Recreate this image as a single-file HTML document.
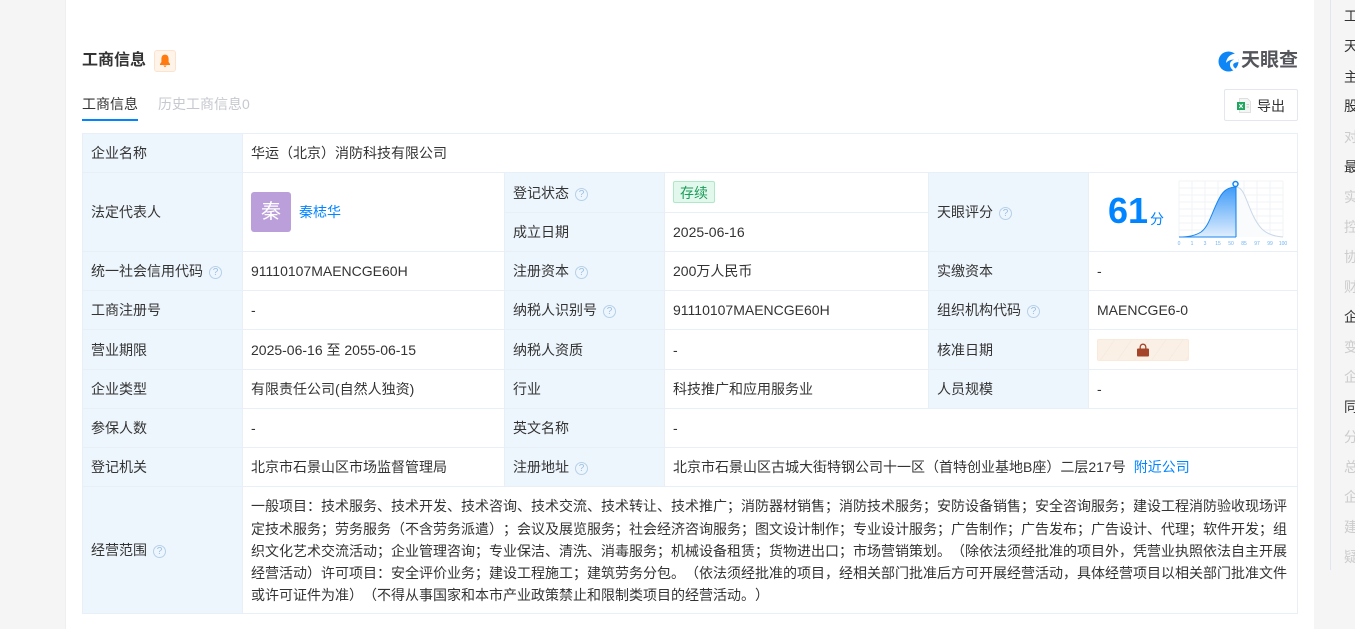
<!DOCTYPE html>
<html lang="zh"><head><meta charset="utf-8"><title>工商信息</title>
<style>
html,body{margin:0;padding:0;background:#f5f5f5}
body{width:1355px;height:629px;overflow:hidden;position:relative;font-family:"Liberation Sans","WenQuanYi Zen Hei","Noto Sans CJK SC",sans-serif;font-size:14px;color:#333;text-spacing-trim:space-all}
.a{position:absolute;white-space:nowrap}
.card{position:absolute;left:66px;top:0;width:1248px;height:629px;background:#fff}
.r{position:absolute;background:#e8eff6}
.bg{position:absolute;background:#eef6fd}
.t{position:absolute;white-space:nowrap;line-height:20px;height:20px}
.q{display:inline-block;width:11px;height:11px;border:1px solid #b6d0e9;border-radius:50%;color:#9dbfe0;font-size:10px;line-height:11px;text-align:center;margin-left:6px;vertical-align:1px;font-family:"Liberation Sans",sans-serif}
.s{position:absolute;left:1344px;font-size:14px;line-height:20px;color:#333}
.g{color:#ccc}
.l{position:absolute;left:251px;width:1036px;height:23px;line-height:23px;white-space:normal;text-align:justify;text-align-last:justify}
</style></head><body>
<div class="card"></div>
<div class="a" style="left:65px;top:0;width:1px;height:629px;background:#efefef"></div>
<div class="a" style="left:1314px;top:0;width:41px;height:629px;background:#f5f5f5"></div>
<div class="a" style="left:1330px;top:0;width:1px;height:570px;background:#dfe6ee"></div>

<div class="a" style="left:82px;top:50px;font-size:16px;line-height:22px;font-weight:700;color:#333">工商信息</div>
<div class="a" style="left:154px;top:50px;width:20px;height:20px;background:#fff4ea;border:1px solid #fde3cc;border-radius:3px"></div>
<svg class="a" style="left:159px;top:54px" width="12" height="14" viewBox="0 0 12 14"><path d="M6 .6C3.400.6 2.400 2.600 2.400 5v3L1 10v1h10v-1L9.600 8V5C9.600 2.600 8.600.6 6 .6z" fill="#ff7a0f"/><path d="M4.300 11.500h3.400L6 13.200z" fill="#ff7a0f"/></svg>

<!-- logo -->
<svg class="a" style="left:1218px;top:51px" width="21" height="21" viewBox="0 0 21 21"><circle cx="10.500" cy="10.500" r="10" fill="#0f86f5"/><path d="M18 2.500C12.500 2.800 8.500 6.500 8 12c2-2.400 5-3.600 8-3.300-3 1-4.300 3-4 5.500.3 2.400 1.800 4.300 3.800 5.300 1-.5 1.800-1.100 2.400-1.800-1.600-.6-2.900-1.900-3-3.500-.1-1.500 1-2.700 5.300-3.200-.1-3.400-.8-6-2.500-8.500z" fill="#fff"/></svg>
<div class="a" style="left:1241px;top:49px;font-size:19px;line-height:24px;font-weight:700;color:#54565c">天眼查</div>

<div class="a" style="left:82px;top:94px;font-size:14px;line-height:20px;color:#333">工商信息</div>
<div class="a" style="left:82px;top:119px;width:56px;height:2px;background:#0084ff"></div>
<div class="a" style="left:158px;top:94px;font-size:14px;line-height:20px;color:#c5c8ce">历史工商信息0</div>

<div class="a" style="left:1224px;top:89px;width:72px;height:30px;border:1px solid #e4e7ee;border-radius:2px;background:#fff"></div>
<svg class="a" style="left:1237px;top:98px" width="14" height="15" viewBox="0 0 14 15"><path d="M2.500.5h8L13.500 3.500v11h-11z" fill="#f4f5f5" stroke="#d4d6d6" stroke-width=".7"/><rect x="0" y="4" width="8" height="8" fill="#1fa65f"/><path d="M2.300 6l3.400 4M5.700 6l-3.400 4" stroke="#fff" stroke-width="1"/><path d="M9.500 6.500h2.500M9.500 9h2.500" stroke="#ccc"/></svg>
<div class="a" style="left:1257px;top:96px;font-size:14px;line-height:20px;color:#333">导出</div>

<!-- table backgrounds -->
<div class="bg" style="left:83px;top:134px;width:159px;height:479px"></div>
<div class="bg" style="left:505px;top:173px;width:159px;height:313px"></div>
<div class="bg" style="left:929px;top:173px;width:159px;height:235px"></div>

<!-- table lines -->
<div class="r" style="left:82px;top:133px;width:1216px;height:1px"></div>
<div class="r" style="left:82px;top:172px;width:1216px;height:1px"></div>
<div class="r" style="left:504px;top:212px;width:424px;height:1px"></div>
<div class="r" style="left:82px;top:251px;width:1216px;height:1px"></div>
<div class="r" style="left:82px;top:290px;width:1216px;height:1px"></div>
<div class="r" style="left:82px;top:329px;width:1216px;height:1px"></div>
<div class="r" style="left:82px;top:369px;width:1216px;height:1px"></div>
<div class="r" style="left:82px;top:408px;width:1216px;height:1px"></div>
<div class="r" style="left:82px;top:447px;width:1216px;height:1px"></div>
<div class="r" style="left:82px;top:486px;width:1216px;height:1px"></div>
<div class="r" style="left:82px;top:613px;width:1216px;height:1px"></div>
<div class="r" style="left:82px;top:133px;width:1px;height:481px"></div>
<div class="r" style="left:242px;top:133px;width:1px;height:481px"></div>
<div class="r" style="left:504px;top:172px;width:1px;height:315px"></div>
<div class="r" style="left:664px;top:172px;width:1px;height:315px"></div>
<div class="r" style="left:928px;top:172px;width:1px;height:236px"></div>
<div class="r" style="left:1088px;top:172px;width:1px;height:236px"></div>
<div class="r" style="left:1297px;top:133px;width:1px;height:481px"></div>

<!-- labels col 1 -->
<div class="t" style="left:91px;top:143px">企业名称</div>
<div class="t" style="left:91px;top:202px">法定代表人</div>
<div class="t" style="left:91px;top:261px">统一社会信用代码<span class="q">?</span></div>
<div class="t" style="left:91px;top:300px">工商注册号</div>
<div class="t" style="left:91px;top:340px">营业期限</div>
<div class="t" style="left:91px;top:379px">企业类型</div>
<div class="t" style="left:91px;top:418px">参保人数</div>
<div class="t" style="left:91px;top:457px">登记机关</div>
<div class="t" style="left:91px;top:540px">经营范围<span class="q">?</span></div>

<!-- col 2 -->
<div class="t" style="left:251px;top:143px">华运（北京）消防科技有限公司</div>
<div class="a" style="left:251px;top:192px;width:40px;height:40px;border-radius:3px;background:#bb9fdb;color:#fff;font-size:20px;line-height:40px;text-align:center">秦</div>
<div class="t" style="left:299px;top:202px;color:#0084ff">秦梽华</div>
<div class="t" style="left:251px;top:261px">91110107MAENCGE60H</div>
<div class="t" style="left:251px;top:300px">-</div>
<div class="t" style="left:251px;top:340px">2025-06-16 至 2055-06-15</div>
<div class="t" style="left:251px;top:379px">有限责任公司(自然人独资)</div>
<div class="t" style="left:251px;top:418px">-</div>
<div class="t" style="left:251px;top:457px">北京市石景山区市场监督管理局</div>

<!-- col 3 labels -->
<div class="t" style="left:513px;top:183px">登记状态<span class="q">?</span></div>
<div class="t" style="left:513px;top:222px">成立日期</div>
<div class="t" style="left:513px;top:261px">注册资本<span class="q">?</span></div>
<div class="t" style="left:513px;top:300px">纳税人识别号<span class="q">?</span></div>
<div class="t" style="left:513px;top:340px">纳税人资质</div>
<div class="t" style="left:513px;top:379px">行业</div>
<div class="t" style="left:513px;top:418px">英文名称</div>
<div class="t" style="left:513px;top:457px">注册地址<span class="q">?</span></div>

<!-- col 4 -->
<div class="a" style="left:673px;top:181px;width:40px;height:20px;background:#e3f8ec;border:1px solid #aee8c8;border-radius:2px;color:#1a9c5a;font-size:14px;line-height:22px;text-align:center">存续</div>
<div class="t" style="left:673px;top:222px">2025-06-16</div>
<div class="t" style="left:673px;top:261px">200万人民币</div>
<div class="t" style="left:673px;top:300px">91110107MAENCGE60H</div>
<div class="t" style="left:673px;top:340px">-</div>
<div class="t" style="left:673px;top:379px">科技推广和应用服务业</div>
<div class="t" style="left:673px;top:418px">-</div>
<div class="t" style="left:673px;top:457px">北京市石景山区古城大街特钢公司十一区（首特创业基地B座）二层217号<span style="color:#0084ff;margin-left:8px">附近公司</span></div>

<!-- col 5 -->
<div class="t" style="left:937px;top:202px">天眼评分<span class="q">?</span></div>
<div class="t" style="left:937px;top:261px">实缴资本</div>
<div class="t" style="left:937px;top:300px">组织机构代码<span class="q">?</span></div>
<div class="t" style="left:937px;top:340px">核准日期</div>
<div class="t" style="left:937px;top:379px">人员规模</div>

<!-- col 6 -->
<div class="a" style="left:1108px;top:188px;font-size:36px;line-height:46px;font-weight:700;color:#0084ff">61</div>
<div class="a" style="left:1150px;top:209px;font-size:14px;line-height:20px;color:#0084ff">分</div>
<svg class="a" style="left:1176px;top:178px" width="114" height="70" viewBox="0 0 114 70">
<defs><linearGradient id="f" x1="0" y1="0" x2="0" y2="1"><stop offset="0" stop-color="#3f9bf8"/><stop offset="1" stop-color="#e0eefd"/></linearGradient></defs>
<g stroke="#f1f3f6" stroke-width="1" fill="none">
<path d="M3 3h104M3 10h104M3 17h104M3 24h104M3 31h104M3 38h104M3 45h104M3 52h104"/>
<path d="M3 3v56M16 3v56M29 3v56M42 3v56M55 3v56M68 3v56M81 3v56M94 3v56M107 3v56"/>
</g>
<path d="M60 9C66 9.500 68 16 71 23C75 33 79 44 86 51C92 57 100 58.500 107 59L60 59Z" fill="#fafbfc"/>
<path d="M60 9C66 9.500 68 16 71 23C75 33 79 44 86 51C92 57 100 58.500 107 59" fill="none" stroke="#c9d8e8" stroke-width="1"/>
<path d="M3 59C12 59 19 58 25 54C32 49 35 38 40 27C44 18 48 9 60 9L60 59Z" fill="url(#f)"/>
<path d="M3 59C12 59 19 58 25 54C32 49 35 38 40 27C44 18 48 9 60 9" fill="none" stroke="#1985f2" stroke-width="1"/>
<path d="M60 9V59" stroke="#0f7fee" stroke-width="1"/>
<path d="M3 59H60" stroke="#1985f2" stroke-width="1"/>
<circle cx="59.500" cy="6" r="2.500" fill="#fff" stroke="#0f86f5" stroke-width="1.500"/>
<g font-size="5" fill="#6fb3f5" text-anchor="middle" font-family="Liberation Sans,sans-serif">
<text x="3" y="67">0</text><text x="16" y="67">1</text><text x="29" y="67">3</text><text x="42" y="67">15</text><text x="55" y="67">50</text><text x="68" y="67">85</text><text x="81" y="67">97</text><text x="94" y="67">99</text><text x="107" y="67">100</text></g>
</svg>
<div class="t" style="left:1097px;top:261px">-</div>
<div class="t" style="left:1097px;top:300px">MAENCGE6-0</div>
<div class="a" style="left:1097px;top:339px;width:90px;height:20px;border:1px solid #fbeadb;border-radius:2px;background:repeating-linear-gradient(125deg,#fbf0e5 0,#fbf0e5 13px,#f7ebdf 13px,#f7ebdf 14px)"></div>
<svg class="a" style="left:1136px;top:343px" width="14" height="14" viewBox="0 0 14 14"><path d="M4.200 6V4a2.800 2.800 0 015.600 0v2" fill="none" stroke="#a4452a" stroke-width="1.300"/><rect x="1" y="5.500" width="12" height="8" rx="1" fill="#a4452a"/></svg>
<div class="t" style="left:1097px;top:379px">-</div>

<!-- scope -->
<div class="l" style="top:495px">一般项目：技术服务、技术开发、技术咨询、技术交流、技术转让、技术推广；消防器材销售；消防技术服务；安防设备销售；安全咨询服务；建设工程消防验收现场评</div>
<div class="l" style="top:518px">定技术服务；劳务服务（不含劳务派遣）；会议及展览服务；社会经济咨询服务；图文设计制作；专业设计服务；广告制作；广告发布；广告设计、代理；软件开发；组</div>
<div class="l" style="top:540px">织文化艺术交流活动；企业管理咨询；专业保洁、清洗、消毒服务；机械设备租赁；货物进出口；市场营销策划。（除依法须经批准的项目外，凭营业执照依法自主开展</div>
<div class="l" style="top:562px">经营活动）许可项目：安全评价业务；建设工程施工；建筑劳务分包。（依法须经批准的项目，经相关部门批准后方可开展经营活动，具体经营项目以相关部门批准文件</div>
<div class="l" style="top:584px;text-align-last:left">或许可证件为准）（不得从事国家和本市产业政策禁止和限制类项目的经营活动。）</div>

<!-- right nav -->
<div class="s" style="top:6px">工</div>
<div class="s" style="top:36px">天</div>
<div class="s" style="top:67px">主</div>
<div class="s" style="top:96px">股</div>
<div class="s g" style="top:127px">对</div>
<div class="s" style="top:157px">最</div>
<div class="s g" style="top:187px">实</div>
<div class="s g" style="top:217px">控</div>
<div class="s g" style="top:247px">协</div>
<div class="s g" style="top:277px">财</div>
<div class="s" style="top:307px">企</div>
<div class="s g" style="top:337px">变</div>
<div class="s g" style="top:367px">企</div>
<div class="s" style="top:397px">同</div>
<div class="s g" style="top:427px">分</div>
<div class="s g" style="top:457px">总</div>
<div class="s g" style="top:487px">企</div>
<div class="s g" style="top:517px">建</div>
<div class="s g" style="top:547px">疑</div>
</body></html>
